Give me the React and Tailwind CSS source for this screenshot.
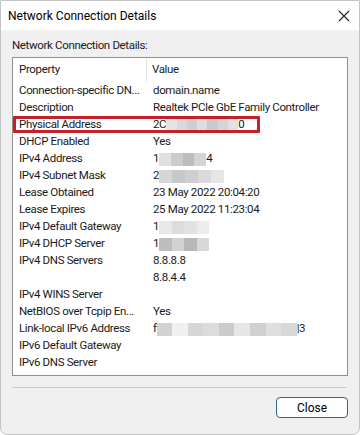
import React from 'react';

const font = { fontFamily: 'Roboto, "Liberation Sans", Arial, sans-serif' };

const Blur = ({ w, shades }) => (
  <span className="inline-flex h-[13px] align-middle" style={{ width: w }}>
    {shades.map((c, i) => (
      <span key={i} className="h-full flex-1" style={{ backgroundColor: c }} />
    ))}
  </span>
);

const rows = [
  ['Connection-specific DN...', 'domain.name'],
  ['Description', 'Realtek PCIe GbE Family Controller'],
  ['Physical Address', <span>2C<Blur w={72} shades={['#e4e4e4', '#d9d9d9', '#cfcfcf', '#dedede', '#c9c9c9', '#d5d5d5', '#e2e2e2']} />0</span>, true],
  ['DHCP Enabled', 'Yes'],
  ['IPv4 Address', <span>1<Blur w={47} shades={['#e0e0e0', '#cccccc', '#bdbdbd', '#d4d4d4']} />4</span>],
  ['IPv4 Subnet Mask', <span>2<Blur w={65} shades={['#d6d6d6', '#c8c8c8', '#cfcfcf', '#dadada', '#e6e6e6']} /></span>],
  ['Lease Obtained', '23 May 2022 20:04:20'],
  ['Lease Expires', '25 May 2022 11:23:04'],
  ['IPv4 Default Gateway', <span>1<Blur w={50} shades={['#e8e8e8', '#dcdcdc', '#e2e2e2', '#ececec']} /></span>],
  ['IPv4 DHCP Server', <span>1<Blur w={50} shades={['#bdbdbd', '#d2d2d2', '#b8b8b8', '#d8d8d8']} /></span>],
  ['IPv4 DNS Servers', '8.8.8.8'],
  ['', '8.8.4.4'],
  ['IPv4 WINS Server', ''],
  ['NetBIOS over Tcpip En...', 'Yes'],
  ['Link-local IPv6 Address', <span>f<Blur w={140} shades={['#d2d2d2', '#f0f0f0', '#d6d6d6', '#dcdcdc', '#cbcbcb', '#e6e6e6', '#d0d0d0', '#dedede', '#d8d8d8']} />|3</span>],
  ['IPv6 Default Gateway', ''],
  ['IPv6 DNS Server', ''],
];

export default function App() {
  return (
    <div style={font} className="w-[360px] h-[435px] bg-[#f0f0f0] flex flex-col border border-[#c4c4c4] rounded-b-[7px] overflow-hidden text-[11.5px] tracking-[-0.35px] text-[#1a1a1a]">
      <div className="h-[29px] bg-white flex items-center justify-between pl-[7px] pr-[8px] shrink-0">
        <span className="text-[12px] tracking-normal text-black">Network Connection Details</span>
        <svg width="12" height="12" viewBox="0 0 12 12" className="mr-[1px]">
          <path d="M1 1 L11 11 M11 1 L1 11" stroke="#222" strokeWidth="1.1" />
        </svg>
      </div>
      <div className="flex-1 flex flex-col px-[11px]">
        <div className="h-[27px] flex items-end pb-[3px]">Network Connection Details:</div>
        <div className="h-[319px] border border-[#8e8f8f] bg-white flex flex-col">
          <div className="h-[24px] flex items-center shrink-0">
            <div className="w-[134px] h-full flex items-center pl-[6px] border-r border-[#e5e5e5]">Property</div>
            <div className="pl-[5px]">Value</div>
          </div>
          {rows.map(([k, v, hl], i) => (
            <div key={i} className="relative h-[17px] flex items-center shrink-0 pt-[1px]">
              <div className="w-[140px] pl-[6px] whitespace-nowrap">{k}</div>
              <div className="whitespace-nowrap">{v}</div>
              {hl && <div className="absolute left-0 top-0 h-[17px] w-[247px] border-[3px] border-[#c3202b] rounded-[1px]" />}
            </div>
          ))}
        </div>
        <div className="mt-[11px] border-t border-[#c8c8c8] mr-[2px]" />
        <div className="flex justify-end mt-[9px]">
          <button className="w-[72px] h-[21px] bg-[#fdfdfd] border border-[#2d6a8a] rounded-[4px] text-[12px] tracking-normal text-black">Close</button>
        </div>
      </div>
    </div>
  );
}
